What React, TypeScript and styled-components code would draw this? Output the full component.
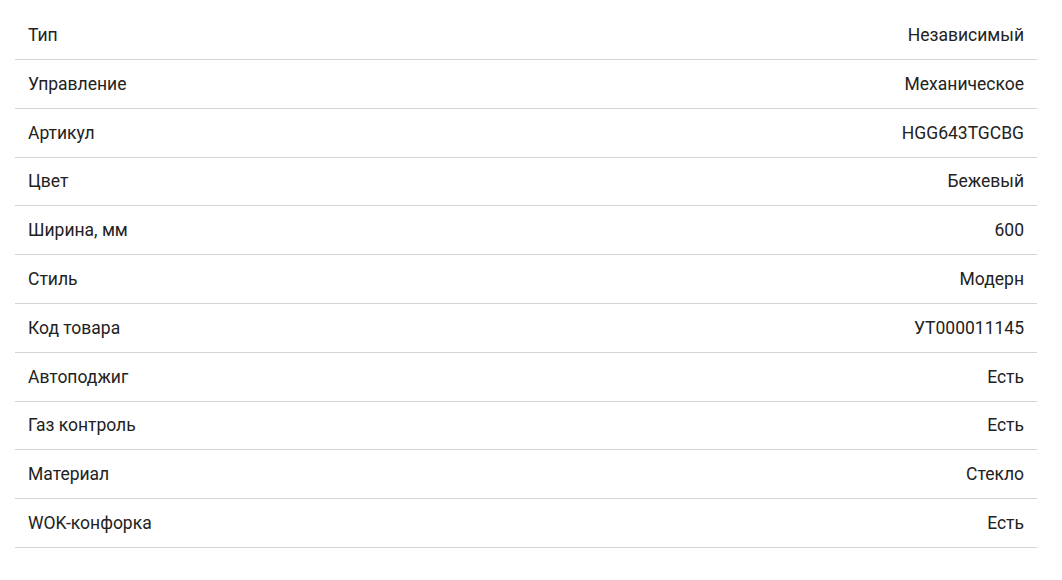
import React from "react";
import styled, { createGlobalStyle } from "styled-components";

const Global = createGlobalStyle`
  html, body { margin: 0; padding: 0; background: #fff; }
  body { font-family: Roboto, "Noto Sans", Arial, sans-serif; }
`;

const Page = styled.div`
  padding: 11.2px 0 0 15px;
`;

const Table = styled.div`
  width: 1022px;
  display: flex;
  flex-direction: column;
`;

const Row = styled.div`
  box-sizing: border-box;
  height: 48.8px;
  display: flex;
  align-items: center;
  justify-content: space-between;
  padding: 0 13px;
  border-bottom: 1px solid #d4d4d4;
  font-size: 17.5px;
  color: #222;
`;

const Label = styled.span``;
const Value = styled.span`
  text-align: right;
`;

const data: [string, string][] = [
  ["Тип", "Независимый"],
  ["Управление", "Механическое"],
  ["Артикул", "HGG643TGCBG"],
  ["Цвет", "Бежевый"],
  ["Ширина, мм", "600"],
  ["Стиль", "Модерн"],
  ["Код товара", "УТ000011145"],
  ["Автоподжиг", "Есть"],
  ["Газ контроль", "Есть"],
  ["Материал", "Стекло"],
  ["WOK-конфорка", "Есть"],
];

export default function App() {
  return (
    <>
      <Global />
      <Page>
        <Table>
          {data.map(([k, v]) => (
            <Row key={k}>
              <Label>{k}</Label>
              <Value>{v}</Value>
            </Row>
          ))}
        </Table>
      </Page>
    </>
  );
}
